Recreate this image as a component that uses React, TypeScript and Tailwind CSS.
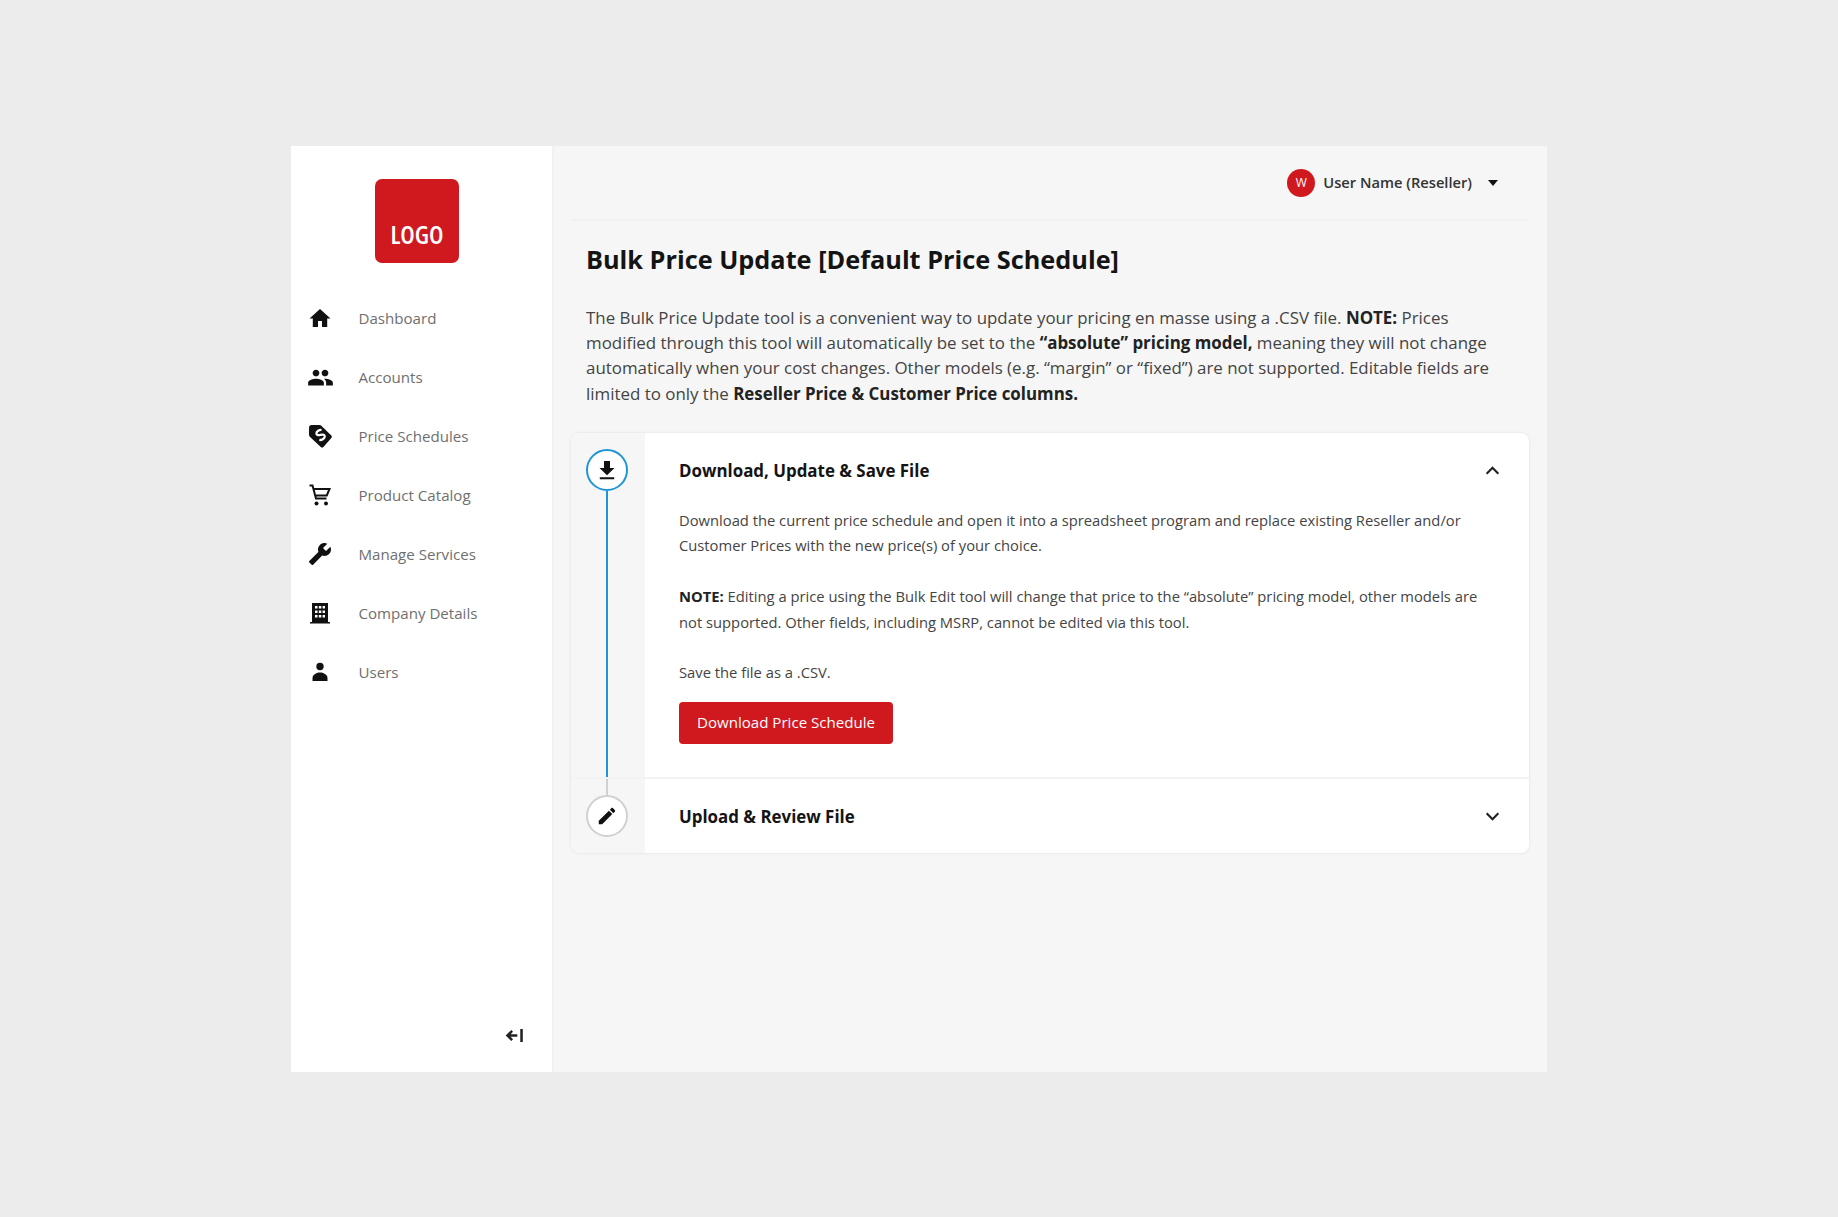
import React from "react"

const navItems = [
  { label: "Dashboard", icon: "home" },
  { label: "Accounts", icon: "people" },
  { label: "Price Schedules", icon: "tag" },
  { label: "Product Catalog", icon: "cart" },
  { label: "Manage Services", icon: "wrench" },
  { label: "Company Details", icon: "building" },
  { label: "Users", icon: "user" },
]

function NavIcon({ name }: { name: string }) {
  if (name === "home") {
    return (
      <svg viewBox="0 0 24 24" className="w-6 h-6 fill-[#111]">
        <path d="M10 21v-6h4v6h5.2v-8.5H22.5L12 3 1.5 12.5h3.3V21z" />
      </svg>
    )
  }
  if (name === "people") {
    return (
      <svg viewBox="0 0 24 24" className="w-[27px] h-[27px] fill-[#111]">
        <path d="M16 11c1.660 0 2.990-1.340 2.990-3S17.660 5 16 5c-1.660 0-3 1.340-3 3s1.340 3 3 3zm-8 0c1.660 0 2.990-1.340 2.990-3S9.660 5 8 5C6.340 5 5 6.340 5 8s1.340 3 3 3zm0 2c-2.330 0-7 1.170-7 3.500V19h14v-2.500c0-2.330-4.670-3.500-7-3.500zm8 0c-.29 0-.62.020-.97.050 1.160.84 1.970 1.970 1.970 3.450V19h6v-2.500c0-2.330-4.670-3.500-7-3.500z" />
      </svg>
    )
  }
  if (name === "tag") {
    return (
      <svg viewBox="0 0 24 24" className="w-[25px] h-[25px]">
        <path className="fill-[#111]" d="M1 3.500Q1 1 3.500 1H11q1.200 0 2 .8l9.400 9.200q1.200 1.200 0 2.400l-7.600 8.600q-1.200 1.300-2.500.1L2 12.500q-1-1-1-2.200z" />
        <path className="stroke-white fill-none" strokeWidth="2.200" transform="rotate(-35 12 10.500)" d="M15.500 7.200c-1.500-1.500-4.600-1.700-5.800-.2-1 1.300-.2 2.500 2.300 3.400 2.600 1 3.500 2.400 2.300 3.800-1.300 1.400-4.200 1.200-6-.4" />
      </svg>
    )
  }
  if (name === "cart") {
    return (
      <svg viewBox="0 0 24 24" className="w-6 h-6">
        <path className="stroke-[#111] fill-none" strokeWidth="2" d="M1.500 2.500H4.500L8 15.500H18.500M5.500 6H21.500L18.800 12.500H7.200" />
        <circle className="fill-[#111]" cx="8.500" cy="20.500" r="2" />
        <circle className="fill-[#111]" cx="18" cy="20.500" r="2" />
      </svg>
    )
  }
  if (name === "wrench") {
    return (
      <svg viewBox="0 0 24 24" className="w-6 h-6 fill-[#111] -scale-x-100">
        <path d="M22.700 19l-9.100-9.100c.9-2.300.4-5-1.500-6.900-2-2-5-2.400-7.400-1.300L9 6 6 9 1.600 4.700C.4 7.100.9 10.100 2.900 12.100c1.900 1.900 4.600 2.400 6.900 1.500l9.100 9.100c.4.4 1 .4 1.400 0l2.300-2.300c.5-.4.5-1.100.1-1.400z" />
      </svg>
    )
  }
  if (name === "building") {
    return (
      <svg viewBox="0 0 24 24" className="w-6 h-6 fill-[#111]">
        <path fillRule="evenodd" d="M4 2h16v19h2v1.500H2V21h2zM7 5v2.500h2.500V5zm3.800 0v2.500h2.500V5zm3.800 0v2.500H17V5zM7 9.500V12h2.500V9.500zm3.800 0V12h2.500V9.500zm3.800 0V12H17V9.500zM7 14v2.500h2.500V14zm3.800 0v2.500h2.500V14zm3.800 0v2.500H17V14z" />
      </svg>
    )
  }
  return (
    <svg viewBox="0 0 24 24" className="w-6 h-6 fill-[#111]">
      <circle cx="12" cy="6.500" r="3.700" />
      <path d="M4.500 18c0-3.600 4.500-5.500 7.500-5.500s7.500 1.900 7.500 5.500v3h-15z" />
    </svg>
  )
}

function Sidebar() {
  return (
    <aside className="w-[263px] shrink-0 bg-white flex flex-col border-r-2 border-[#f1f1f1] pt-[33px] pb-[29px]">
      <div className="ml-[84px] w-[84px] h-[84px] rounded-[7px] bg-[#d0181f] flex items-end justify-center pb-[14px]">
        <span className="text-white text-[25.500px] leading-[30px] font-semibold font-stretch-condensed">LOGO</span>
      </div>
      <nav className="mt-[26px] flex flex-col">
        {navItems.map((item) => (
          <div key={item.label} className="h-[59px] flex items-center">
            <div className="w-[58px] flex justify-center shrink-0">
              <NavIcon name={item.icon} />
            </div>
            <span className="ml-[9.500px] text-[15.100px] text-[#6f6f6f] font-medium">{item.label}</span>
          </div>
        ))}
      </nav>
      <div className="mt-auto flex justify-end pr-[28px]">
        <svg viewBox="0 0 20 16" className="w-[19px] h-[15px] stroke-[#222] fill-none" strokeWidth="2.700">
          <path d="M13 8H2.500M7.500 3 2.500 8l5 5M17.500 1v14" />
        </svg>
      </div>
    </aside>
  )
}

function Header() {
  return (
    <div className="ml-[17px] mr-[18px] h-[75px] border-b-2 border-[#f0f0f0] flex items-center justify-end pr-[31px] pt-[1px]">
      <div className="w-[28px] h-[28px] rounded-full bg-[#d0181f] flex items-center justify-center text-white text-[12px]">W</div>
      <span className="ml-[8px] text-[14.700px] font-semibold text-[#333]">User Name (Reseller)</span>
      <svg viewBox="0 0 10 6" className="ml-[16px] w-[10px] h-[6px] fill-[#111]">
        <path d="M0 0h10L5 6z" />
      </svg>
    </div>
  )
}

export default function App() {
  return (
    <div className="h-[1217px] bg-[#ececec] flex items-center justify-center font-['Open_Sans',sans-serif]">
      <div className="w-[1256px] h-[926px] flex">
        <Sidebar />
        <main className="flex-1 bg-[#f6f6f6] flex flex-col">
          <Header />

          <div className="pl-[32px] pr-[32px] pt-[20px]">
            <h1 className="text-[25.300px] leading-[36px] font-bold text-[#141414]">
              Bulk Price Update [Default Price Schedule]
            </h1>
            <p className="mt-[28px] w-[915px] text-[16.900px] leading-[25.400px] text-[#444]">
              The Bulk Price Update tool is a convenient way to update your pricing en masse using a .CSV file.{" "}
              <b className="font-bold text-[#222]">NOTE:</b> Prices modified through this tool will automatically be set to the{" "}
              <b className="font-bold text-[#222]">“absolute” pricing model,</b> meaning they will not change automatically when your cost changes. Other models (e.g. “margin” or “fixed”) are not supported. Editable fields are limited to only the{" "}
              <b className="font-bold text-[#222]">Reseller Price &amp; Customer Price columns.</b>
            </p>
          </div>

          <section className="ml-[17px] mr-[18px] mt-[27px] rounded-[8px] overflow-hidden bg-white shadow-[0_0_3px_rgba(0,0,0,0.1)]">
            {/* Step 1 */}
            <div className="flex h-[346px] border-b-2 border-[#f3f3f3]">
              <div className="w-[74px] shrink-0 bg-[#f6f6f6] flex flex-col items-center pt-[16px] pr-[2px]">
                <div className="w-[42px] h-[42px] shrink-0 rounded-full border-[2.500px] border-[#1f95d8] bg-white flex items-center justify-center">
                  <svg viewBox="0 0 24 24" className="w-[24px] h-[24px] fill-[#111]">
                    <path d="M9 3h6v7h4.500L12 17.300 4.500 10H9zM4.800 19.300h14.400v2H4.800z" />
                  </svg>
                </div>
                <div className="w-[2px] flex-1 bg-[#1f95d8]" />
              </div>
              <div className="flex-1 pl-[34px] pr-[29px]">
                <div className="flex items-center justify-between h-[74px] pt-[1px]">
                  <h2 className="text-[16.900px] font-bold text-[#141414]">Download, Update &amp; Save File</h2>
                  <svg viewBox="0 0 16 10" className="w-[15px] h-[9px] stroke-[#222] fill-none" strokeWidth="2.400">
                    <path d="M1.500 8.500 8 2l6.500 6.500" />
                  </svg>
                </div>
                <div className="text-[14.750px] leading-[25.300px] text-[#444] mt-[1px]">
                  <p>
                    Download the current price schedule and open it into a spreadsheet program and replace existing Reseller and/or Customer Prices with the new price(s) of your choice.
                  </p>
                  <p className="mt-[25.500px]">
                    <b className="font-bold text-[#222]">NOTE:</b> Editing a price using the Bulk Edit tool will change that price to the “absolute” pricing model, other models are not supported. Other fields, including MSRP, cannot be edited via this tool.
                  </p>
                  <p className="mt-[25.500px]">Save the file as a .CSV.</p>
                </div>
                <button className="mt-[16px] w-[214px] h-[42px] rounded-[4px] bg-[#d0181f] text-white text-[15.100px] font-medium flex items-center justify-center">
                  Download Price Schedule
                </button>
              </div>
            </div>

            {/* Step 2 */}
            <div className="flex h-[74px]">
              <div className="w-[74px] shrink-0 bg-[#f6f6f6] flex flex-col items-center pr-[2px]">
                <div className="w-[2px] h-[16px] bg-[#d0d0d0]" />
                <div className="w-[42px] h-[42px] shrink-0 rounded-full border-2 border-[#d0d0d0] bg-white flex items-center justify-center">
                  <svg viewBox="0 0 24 24" className="w-[22px] h-[22px] fill-[#111]">
                    <path d="M3 17.250V21h3.750L17.810 9.940l-3.750-3.750L3 17.250zM20.710 7.040c.39-.39.39-1.020 0-1.410l-2.340-2.340c-.39-.39-1.020-.39-1.410 0l-1.830 1.830 3.750 3.750 1.830-1.830z" />
                  </svg>
                </div>
              </div>
              <div className="flex-1 pl-[34px] pr-[29px] pt-[1px] flex items-center justify-between">
                <h2 className="text-[16.900px] font-bold text-[#141414]">Upload &amp; Review File</h2>
                <svg viewBox="0 0 16 10" className="w-[15px] h-[9px] stroke-[#222] fill-none" strokeWidth="2.400">
                  <path d="M1.500 1.500 8 8l6.500-6.500" />
                </svg>
              </div>
            </div>
          </section>
        </main>
      </div>
    </div>
  )
}
